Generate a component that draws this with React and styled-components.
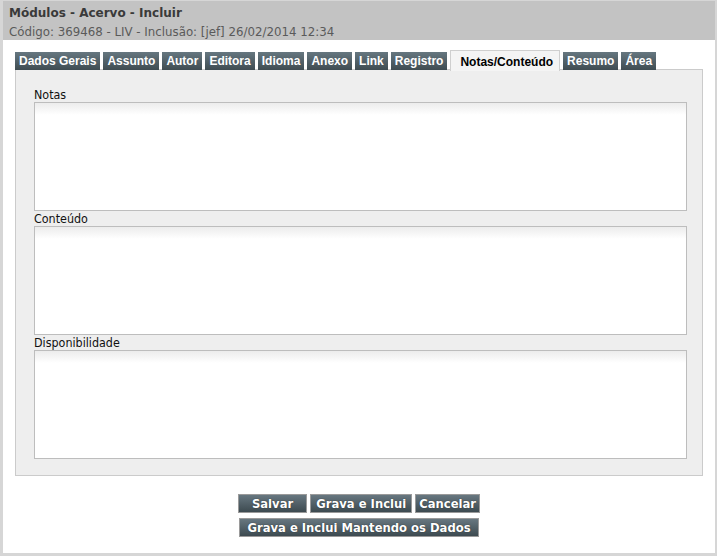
import React from 'react'
import styled, { createGlobalStyle } from 'styled-components'

const GlobalStyle = createGlobalStyle`
  * { margin: 0; padding: 0; box-sizing: border-box; }
  body { background: #fff; font-family: "DejaVu Sans Condensed", "DejaVu Sans", sans-serif; }
`

const Frame = styled.div`
  width: 717px;
  height: 556px;
  background: #d6d6d6;
  padding: 1px 3px 3px 3px;
  display: flex;
`

const Window = styled.div`
  flex: 1;
  background: #fff;
  display: flex;
  flex-direction: column;
`

const Header = styled.div`
  background: #c3c3c3;
  height: 39px;
  padding: 5px 0 0 6px;
  display: flex;
  flex-direction: column;
  gap: 4px;
`

const Title = styled.div`
  font-family: "DejaVu Sans", sans-serif;
  font-weight: bold;
  font-size: 12px;
  color: #3a3a3a;
  line-height: 15px;
`

const Subtitle = styled.div`
  font-family: "DejaVu Sans", sans-serif;
  font-size: 11.8px;
  color: #5a5a5a;
  line-height: 15px;
`

const Body = styled.div`
  padding: 11px 12px 0 12px;
  display: flex;
  flex-direction: column;
`

const TabBar = styled.div`
  display: flex;
  align-items: flex-end;
  gap: 3px;
  height: 19px;
  position: relative;
  z-index: 1;
`

const Tab = styled.div`
  font-family: "Liberation Sans", Arial, sans-serif;
  font-weight: bold;
  font-size: 12px;
  height: ${p => (p.$active ? '21px' : '18px')};
  line-height: ${p => (p.$active ? '22px' : '18px')};
  padding: ${p => (p.$active ? '0 6px 0 9px' : '0 4px')};
  margin-bottom: ${p => (p.$active ? '-1px' : '0')};
  color: ${p => (p.$active ? '#000' : '#fff')};
  background: ${p => (p.$active ? '#f4f4f4' : 'linear-gradient(#667780, #3f4c52)')};
  border: ${p => (p.$active ? '1px solid #cfcfcf' : 'none')};
  border-bottom: none;
`

const Panel = styled.div`
  margin-top: -1px;
  width: 688px;
  height: 407px;
  background: #eeeeee;
  border: 1px solid #cbcbcb;
  padding: 17px 15px 0 18px;
  display: flex;
  flex-direction: column;
`

const Label = styled.label`
  font-size: 12.4px;
  color: #111;
  line-height: 15px;
  height: 15px;
`

const Area = styled.div`
  height: 109px;
  background: linear-gradient(#ececec, #fff 12px);
  border: 1px solid #bdbdbd;
`

const Buttons = styled.div`
  margin-top: 18px;
  display: flex;
  flex-direction: column;
  align-items: center;
  gap: 5px;
`

const ButtonRow = styled.div`
  display: flex;
  gap: 3px;
`

const Button = styled.button`
  font-family: "DejaVu Sans", sans-serif;
  font-weight: bold;
  font-size: 11.6px;
  color: #fff;
  height: 19px;
  padding: 0 ${p => p.$pad || 3}px;
  background: linear-gradient(#677780, #3d4a50);
  border: 1px solid #9a9a9a;
  text-shadow: 0 0 1px #222;
  cursor: pointer;
  line-height: 16px;
`

const tabs = ['Dados Gerais', 'Assunto', 'Autor', 'Editora', 'Idioma', 'Anexo', 'Link', 'Registro', 'Notas/Conteúdo', 'Resumo', 'Área']
const fields = ['Notas', 'Conteúdo', 'Disponibilidade']

export default function App() {
  return (
    <>
      <GlobalStyle />
      <Frame>
        <Window>
          <Header>
            <Title>Módulos - Acervo - Incluir</Title>
            <Subtitle>Código: 369468 - LIV - Inclusão: [jef] 26/02/2014 12:34</Subtitle>
          </Header>
          <Body>
            <TabBar>
              {tabs.map(t => (
                <Tab key={t} $active={t === 'Notas/Conteúdo'}>{t}</Tab>
              ))}
            </TabBar>
            <Panel>
              {fields.map(f => (
                <React.Fragment key={f}>
                  <Label>{f}</Label>
                  <Area />
                </React.Fragment>
              ))}
            </Panel>
            <Buttons>
              <ButtonRow>
                <Button $pad={13}>Salvar</Button>
                <Button $pad={5}>Grava e Inclui</Button>
                <Button>Cancelar</Button>
              </ButtonRow>
              <ButtonRow>
                <Button $pad={7}>Grava e Inclui Mantendo os Dados</Button>
              </ButtonRow>
            </Buttons>
          </Body>
        </Window>
      </Frame>
    </>
  )
}
